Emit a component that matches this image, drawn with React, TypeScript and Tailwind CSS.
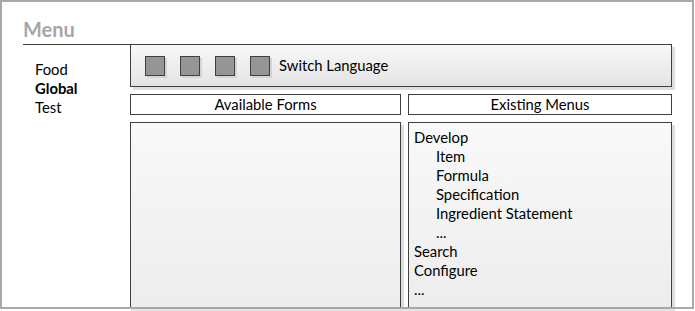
import React from "react";

const font = { fontFamily: "Lato, 'Open Sans', sans-serif" };

function Square() {
  return (
    <div className="w-[20px] h-[20px] border border-[#404040] bg-[#959595] shadow-[2px_2px_0_#d4d4d4]" />
  );
}

export default function App() {
  const menus: { label: string; indent?: boolean }[] = [
    { label: "Develop" },
    { label: "Item", indent: true },
    { label: "Formula", indent: true },
    { label: "Specification", indent: true },
    { label: "Ingredient Statement", indent: true },
    { label: "...", indent: true },
    { label: "Search" },
    { label: "Configure" },
    { label: "..." },
  ];
  return (
    <div className="w-[695px] h-[311px] bg-white text-black" style={font}>
      <div className="w-[694px] h-[309px] border-2 border-[#a8a8a8] overflow-hidden">
        <div className="h-[42px] pl-[21px] pt-[16px]">
          <span className="text-[20px] leading-[22px] font-bold text-[#a6a6a6]">Menu</span>
        </div>
        <div className="flex">
          <div className="ml-[21px] w-[107px] border-t border-[#404040] pt-[15px] pl-[12px] text-[14.8px] leading-[19px]">
            <div>Food</div>
            <div className="font-bold">Global</div>
            <div>Test</div>
          </div>
          <div className="w-[545px] flex flex-col">
            <div className="w-[542px] h-[43px] border border-[#404040] bg-gradient-to-b from-[#f8f8f8] to-[#e4e4e4] shadow-[3px_3px_0_#dedede] flex items-center pl-[14px] gap-[15px]">
              <Square />
              <Square />
              <Square />
              <Square />
              <span className="ml-[-6px] text-[14.8px] leading-[19px]">Switch Language</span>
            </div>
            <div className="flex gap-[7px] mt-[7px]">
              <div className="w-[271px] h-[21px] border border-[#404040] bg-white flex items-center justify-center text-[14.8px] leading-[19px]">
                Available Forms
              </div>
              <div className="w-[264px] h-[21px] border border-[#404040] bg-white flex items-center justify-center text-[14.8px] leading-[19px]">
                Existing Menus
              </div>
            </div>
            <div className="flex gap-[7px] mt-[7px]">
              <div className="w-[271px] h-[200px] border border-[#404040] bg-gradient-to-b from-[#f9f9f9] to-[#ececec] shadow-[3px_3px_0_#dedede]" />
              <div className="w-[264px] h-[200px] border border-[#404040] bg-gradient-to-b from-[#f9f9f9] to-[#ececec] shadow-[3px_3px_0_#dedede] pt-[5px] pl-[5px] text-[14.8px] leading-[19px]">
                {menus.map((m, i) => (
                  <div key={i} className={m.indent ? "pl-[22px]" : ""}>
                    {m.label}
                  </div>
                ))}
              </div>
            </div>
          </div>
        </div>
      </div>
      <div className="ml-[131px] w-[544px] h-[2px] bg-[#e4e4e4]" />
    </div>
  );
}
